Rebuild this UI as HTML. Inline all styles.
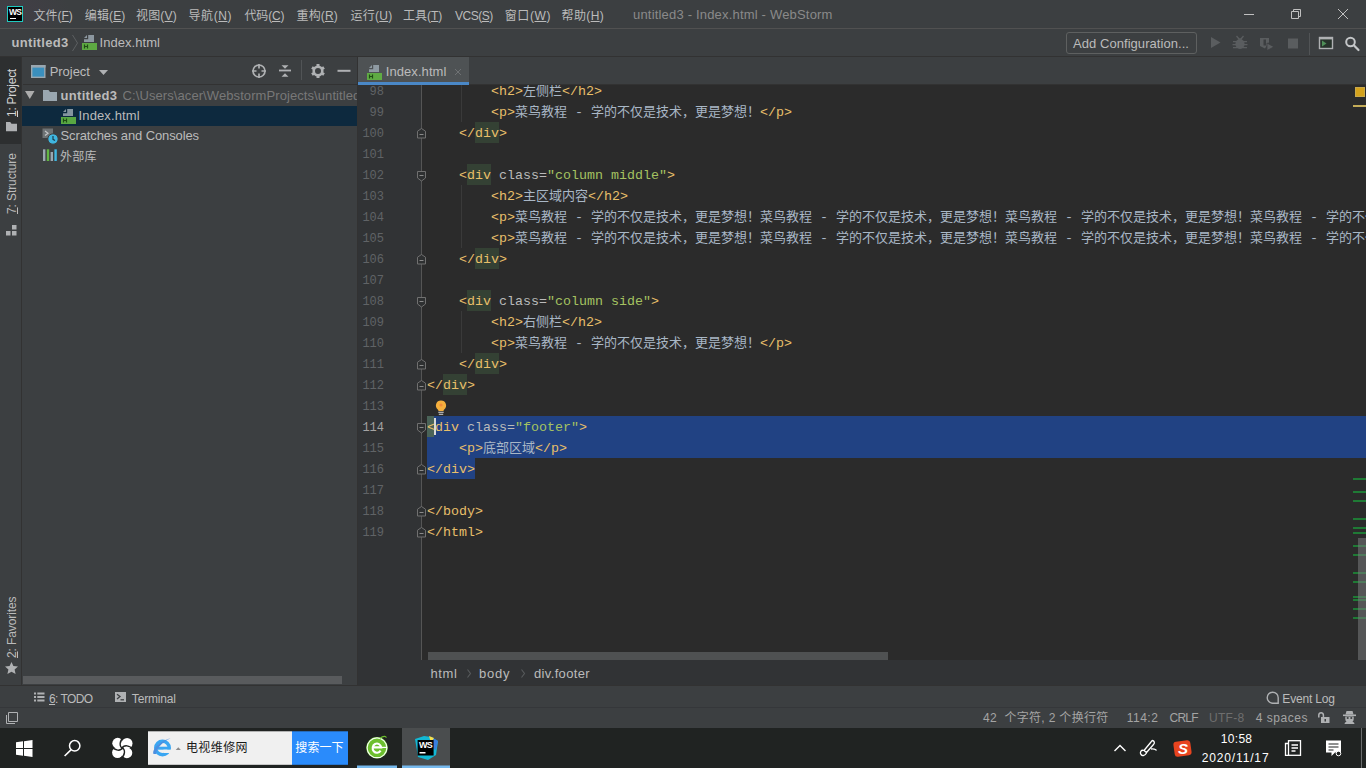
<!DOCTYPE html>
<html lang="zh-CN">
<head>
<meta charset="utf-8">
<title>untitled3 - Index.html - WebStorm</title>
<style>
*{box-sizing:border-box;margin:0;padding:0}
html,body{width:1366px;height:768px;overflow:hidden;background:#3c3f41}
body{position:relative;font-family:"Liberation Sans","Noto Sans CJK SC",sans-serif;font-size:13px;color:#bbbbbb}
.abs{position:absolute}
.t{position:absolute;white-space:nowrap;line-height:20px;height:20px}
svg{position:absolute;overflow:visible}
/* title bar */
#title{left:0;top:0;width:1366px;height:28px;background:radial-gradient(ellipse 60px 30px at 10px 10px,rgba(110,55,110,.12),rgba(110,55,110,0)) #3c3f41}
#titleline{left:0;top:28px;width:1366px;height:1px;background:#515151}
.menu{top:4px;color:#bbbbbb;font-size:13px}
.menu u{text-decoration:underline;text-underline-offset:2px}
/* nav bar */
#nav{left:0;top:29px;width:1366px;height:28px;background:#3c3f41}
#navline{left:0;top:56px;width:1366px;height:1px;background:#323232}
/* left stripe */
#lstripe{left:0;top:57px;width:22px;height:628px;background:#3c3f41;border-right:1px solid #323232}
#ptab{left:0;top:57px;width:21px;height:87px;background:#2d2f30}
.vt{position:absolute;white-space:nowrap;transform-origin:0 0;transform:rotate(-90deg);line-height:22px;height:22px;font-size:13px;color:#bbbbbb}
/* project panel */
#proj{left:22px;top:57px;width:336px;height:628px;background:#3c3f41}
#treesel{left:22px;top:106px;width:335px;height:20px;background:#0d293e}
#projscroll{left:23px;top:676px;width:319px;height:8px;background:#595b5d}
/* editor */
#tabs{left:358px;top:57px;width:1008px;height:28px;background:#3c3f41}
#tab{left:358px;top:57px;width:111px;height:28px;background:#4e5254}
#tabul{left:358px;top:82px;width:111px;height:3px;background:#4a88c7}
#tabsline{left:469px;top:84px;width:897px;height:1px;background:#323232}
#editor{left:358px;top:85px;width:1008px;height:575px;background:#2b2b2b;overflow:hidden}
#gutter{left:0;top:0;width:63px;height:575px;background:#313335}
#foldline{left:63px;top:0;width:1px;height:575px;background:#555555}
.ln{position:absolute;left:0;width:26px;text-align:right;font-family:"Liberation Mono",monospace;font-size:12px;line-height:21px;height:21px;color:#606366}
.cl{position:absolute;left:69px;white-space:pre;font-family:"Liberation Mono","Noto Sans CJK SC",monospace;font-size:13.333px;line-height:21px;height:21px;color:#a9b7c6}
.cl .z{font-size:13px;font-family:"Noto Sans CJK SC",sans-serif;line-height:0;position:relative;top:-0.5px}
.tg{color:#e8bf6a}
.an{color:#bababa}
.av{color:#a5c261}
.hl{background:#344134;display:inline-block;height:21px;vertical-align:top;margin-top:-1px;padding-top:1px}
.ln.cur{color:#a4a3a3}
#sel1{left:69px;top:331px;width:940px;height:42px;background:#214283}
#sel2{left:69px;top:373px;width:48px;height:21px;background:#214283}
/* breadcrumbs */
#crumbs{left:358px;top:660px;width:1008px;height:25px;background:#313335}
/* bottom */
#bstripe{left:0;top:685px;width:1366px;height:22px;background:#3c3f41;border-top:1px solid #323232}
#status{left:0;top:707px;width:1366px;height:21px;background:#3c3f41;border-top:1px solid #35373a}
#taskbar{left:0;top:728px;width:1366px;height:40px;background:#202322}
</style>
</head>
<body>
<!-- TITLE BAR -->
<div class="abs" id="title"></div>
<div class="abs" id="titleline"></div>
<!-- NAV BAR -->
<div class="abs" id="nav"></div>
<div class="abs" id="navline"></div>
<!-- WS logo -->
<div class="abs" style="left:7px;top:6px;width:16px;height:16px;background:#000;border:1px solid #20c9c0"></div>
<div class="abs" style="left:8px;top:8px;width:14px;height:9px;font-family:'Liberation Sans',sans-serif;font-weight:bold;font-size:8.500px;line-height:9px;color:#fff;letter-spacing:-0.900px;white-space:nowrap;text-align:center">WS</div>
<div class="abs" style="left:10px;top:18px;width:6px;height:1px;background:#fff"></div>
<!-- window controls -->
<svg style="left:1238px;top:4px" width="120" height="20" viewBox="0 0 120 20">
<path d="M6 10.5h10" stroke="#c0c0c0" stroke-width="1" fill="none"/>
<path d="M53.5 7.5h7v7h-7zM55.5 7.5v-2h7v7h-2" stroke="#c0c0c0" stroke-width="1" fill="none"/>
<path d="M100 5l10 10M110 5l-10 10" stroke="#c0c0c0" stroke-width="1" fill="none"/>
</svg>

<!-- nav chevron -->
<svg style="left:70px;top:33px" width="10" height="20" viewBox="0 0 10 20"><path d="M2.5 2l5 8-5 8" stroke="#5c5f61" stroke-width="1" fill="none"/></svg>
<!-- nav html icon -->
<svg style="left:82px;top:35px" width="15" height="15" viewBox="0 0 15 15"><path d="M5 0h7v7H2V3z" fill="#9aa7b0" opacity=".85"/><path d="M5.6 0v3.600H2" fill="none" stroke="#3c3f41" stroke-width="1.200"/><rect x="0" y="8" width="15" height="7" fill="#62b543" opacity=".9"/><path d="M2.500 9.500v4M5.500 9.500v4M2.500 11.500h3" stroke="#1f4d14" stroke-width="1.200" fill="none"/></svg>
<!-- add configuration -->
<div class="abs" style="left:1066px;top:32px;width:131px;height:22px;border:1px solid #5e6060;border-radius:3px"></div>
<!-- run icons -->
<svg style="left:1205px;top:33px" width="161" height="22" viewBox="0 0 161 22">
<path d="M6 4l9.5 5.5L6 15z" fill="#5a5d5f"/>
<g fill="#5a5d5f"><ellipse cx="35" cy="11" rx="4.600" ry="5"/><path d="M31.500 3l2.500 3h2l2.500-3" fill="none" stroke="#5a5d5f" stroke-width="1.300"/><path d="M28 8h14v1.300H28zM27.500 11h15v1.300h-15zM28 14h14v1.300H28z"/></g>
<path d="M55 5h9v4l-4 6.5-5-2.500z" fill="#5a5d5f"/><path d="M58.500 6.500h2.500v6h-2.500z" fill="#3c3f41"/><path d="M62 10l7 3.800-7 3.800z" fill="#5a5d5f" stroke="#3c3f41" stroke-width=".8"/>
<rect x="83" y="5.500" width="10" height="10" fill="#5a5d5f"/>
<path d="M104.500 0v22" stroke="#515456" stroke-width="1"/>
<rect x="114.500" y="4.500" width="13" height="11" fill="#27332b" stroke="#afb1b3" stroke-width="1.400"/><rect x="114" y="4" width="14" height="2.400" fill="#afb1b3"/><path d="M117 7.500l4.500 3-4.500 3z" fill="#4f8f58"/>
<circle cx="145.500" cy="9" r="4.300" fill="none" stroke="#c4c6c8" stroke-width="2"/><path d="M148.800 12.300l4.700 4.700" stroke="#c4c6c8" stroke-width="2.200" stroke-linecap="round"/>
</svg>

<!-- LEFT STRIPE -->
<div class="abs" id="lstripe"></div>
<div class="abs" id="ptab"></div>
<!-- PROJECT PANEL -->
<div class="abs" id="proj"></div>
<div class="abs" id="treesel"></div>
<div class="abs" id="projscroll"></div>
<div class="abs" style="left:357px;top:57px;width:1px;height:628px;background:#323232"></div>
<!-- left stripe contents -->
<div class="vt" style="left:1px;top:117px;color:#d4d4d4;font-size:12px;letter-spacing:-0.28px"><u>1</u>: Project</div>
<svg style="left:6px;top:122px" width="11" height="9.300" viewBox="0 0 13 11"><path d="M0 0h5l1.500 2H13v9H0z" fill="#afb1b3"/></svg>
<div class="vt" style="left:1px;top:214px;font-size:12px;letter-spacing:-0.1px"><u>7</u>: Structure</div>
<svg style="left:6px;top:225px" width="11" height="11" viewBox="0 0 11 11"><rect x="6" y="0" width="4.500" height="4.500" fill="#afb1b3"/><rect x="0" y="6" width="4.500" height="4.500" fill="#afb1b3"/><rect x="6" y="6" width="4.500" height="4.500" fill="#afb1b3"/></svg>
<div class="vt" style="left:1px;top:658px;font-size:12px;letter-spacing:-0.1px"><u>2</u>: Favorites</div>
<svg style="left:5px;top:662px" width="13" height="12" viewBox="0 0 13 12"><path d="M6.500 0l1.900 4.100 4.600.5-3.400 3 1 4.400-4.100-2.300L2.400 12l1-4.400L0 4.600l4.600-.5z" fill="#afb1b3"/></svg>
<!-- project header -->
<div class="abs" style="left:23px;top:84px;width:334px;height:1px;background:#323232"></div>
<svg style="left:31px;top:65px" width="15" height="13" viewBox="0 0 15 13"><rect x=".700" y=".700" width="13.100" height="11.600" fill="#3a8fbd" stroke="#9aa7b0" stroke-width="1.400"/><rect x="0" y="0" width="14.500" height="2.600" fill="#9aa7b0"/></svg>
<svg style="left:99px;top:70px" width="9" height="5" viewBox="0 0 9 5"><path d="M0 0h9L4.500 5z" fill="#afb1b3"/></svg>
<svg style="left:250px;top:60px" width="104" height="22" viewBox="0 0 104 22">
<circle cx="9" cy="11" r="6" fill="none" stroke="#afb1b3" stroke-width="1.700"/><path d="M9 4v4.500M9 13.500v4.500M2 11h4.500M11.500 11h4.500" stroke="#afb1b3" stroke-width="1.700"/>
<path d="M29 10.500h12" stroke="#afb1b3" stroke-width="1.800"/><path d="M31.500 5.300h7L35 8.800zM31.500 16.700h7L35 13.200z" fill="#afb1b3"/>
<path d="M51.500 0v20" stroke="#515456" stroke-width="1"/>
<g transform="translate(68 11)"><circle r="4.300" fill="none" stroke="#afb1b3" stroke-width="2.600"/><g fill="#afb1b3"><rect x="-1.500" y="-7" width="3" height="3"/><rect x="-1.500" y="4" width="3" height="3"/><rect x="-1.500" y="-7" width="3" height="3" transform="rotate(60)"/><rect x="-1.500" y="4" width="3" height="3" transform="rotate(60)"/><rect x="-1.500" y="-7" width="3" height="3" transform="rotate(120)"/><rect x="-1.500" y="4" width="3" height="3" transform="rotate(120)"/></g></g>
<path d="M87.500 10.800h13" stroke="#afb1b3" stroke-width="2"/>
</svg>
<!-- tree icons -->
<svg style="left:25px;top:91px" width="10" height="8" viewBox="0 0 10 8"><path d="M0 0h9.500L4.750 8z" fill="#adadad"/></svg>
<svg style="left:43px;top:90px" width="14" height="11" viewBox="0 0 14 11"><path d="M0 0h5.500l1.500 2H14v9H0z" fill="#9aa7b0"/></svg>
<svg style="left:61px;top:109px" width="15" height="15" viewBox="0 0 15 15"><path d="M5 0h7v7H2V3z" fill="#9aa7b0" opacity=".85"/><path d="M5.6 0v3.600H2" fill="none" stroke="#0d293e" stroke-width="1.200"/><rect x="0" y="8" width="15" height="7" fill="#62b543" opacity=".9"/><path d="M2.500 9.500v4M5.500 9.500v4M2.500 11.500h3" stroke="#1f4d14" stroke-width="1.200" fill="none"/></svg>
<svg style="left:42px;top:128px" width="17" height="17" viewBox="0 0 17 17"><rect x=".500" y=".500" width="10.500" height="9.500" fill="#6e7375"/><path d="M3 3l3 2.300L3 7.600" stroke="#c4c6c8" stroke-width="1.200" fill="none"/><circle cx="11" cy="11" r="5.200" fill="#3fb6e0" stroke="#3c3f41" stroke-width="1"/><path d="M11 8v3.300l2 1.200" stroke="#1d3d4a" stroke-width="1.200" fill="none"/></svg>
<svg style="left:43px;top:149px" width="15" height="12" viewBox="0 0 15 12"><rect x="0" y=".300" width="2.400" height="11.700" fill="#9aa7b0"/><rect x="3.800" y=".300" width="2.400" height="11.700" fill="#62b543"/><rect x="7.600" y="3" width="2.400" height="9" fill="#9aa7b0"/><rect x="11.400" y=".300" width="2.400" height="11.700" fill="#40b6e0"/></svg>

<!-- EDITOR TABS -->
<div class="abs" id="tabs"></div>
<div class="abs" id="tab"></div>
<div class="abs" id="tabul"></div>
<div class="abs" id="tabsline"></div>
<svg style="left:367px;top:65px" width="15" height="15" viewBox="0 0 15 15"><path d="M5 0h7v7H2V3z" fill="#9aa7b0" opacity=".85"/><path d="M5.6 0v3.600H2" fill="none" stroke="#4e5254" stroke-width="1.200"/><rect x="0" y="8" width="15" height="7" fill="#62b543" opacity=".9"/><path d="M2.500 9.500v4M5.500 9.500v4M2.500 11.500h3" stroke="#1f4d14" stroke-width="1.200" fill="none"/></svg>
<svg style="left:454px;top:68px" width="8" height="8" viewBox="0 0 8 8"><path d="M1 1l6 6M7 1l-6 6" stroke="#6e7173" stroke-width="1" fill="none"/></svg>

<!-- EDITOR -->
<div class="abs" id="editor">
<div class="abs" id="gutter"></div>
<div class="abs" id="foldline"></div>
<div class="abs" id="sel1"></div>
<div class="abs" id="sel2"></div>
<div class="abs" style="left:103px;top:-5px;width:1px;height:42px;background:#3a3a3a"></div>
<div class="abs" style="left:103px;top:100px;width:1px;height:63px;background:#3a3a3a"></div>
<div class="abs" style="left:103px;top:226px;width:1px;height:42px;background:#3a3a3a"></div>
<div class="abs" style="left:69px;top:331px;width:7px;height:21px;background:#4a6358"></div>
<svg style="left:59px;top:43px" width="10" height="11" viewBox="0 0 10 11"><path d="M.5 3.200L4.500 .500 8.500 3.200V10H.500z" fill="#2e3031" stroke="#707070" stroke-width="1"/><path d="M2.500 6.500h4" stroke="#8a8a8a" stroke-width="1"/></svg>
<svg style="left:59px;top:169px" width="10" height="11" viewBox="0 0 10 11"><path d="M.5 3.200L4.500 .500 8.500 3.200V10H.500z" fill="#2e3031" stroke="#707070" stroke-width="1"/><path d="M2.500 6.500h4" stroke="#8a8a8a" stroke-width="1"/></svg>
<svg style="left:59px;top:274px" width="10" height="11" viewBox="0 0 10 11"><path d="M.5 3.200L4.500 .500 8.500 3.200V10H.500z" fill="#2e3031" stroke="#707070" stroke-width="1"/><path d="M2.500 6.500h4" stroke="#8a8a8a" stroke-width="1"/></svg>
<svg style="left:59px;top:295px" width="10" height="11" viewBox="0 0 10 11"><path d="M.5 3.200L4.500 .500 8.500 3.200V10H.500z" fill="#2e3031" stroke="#707070" stroke-width="1"/><path d="M2.500 6.500h4" stroke="#8a8a8a" stroke-width="1"/></svg>
<svg style="left:59px;top:379px" width="10" height="11" viewBox="0 0 10 11"><path d="M.5 3.200L4.500 .500 8.500 3.200V10H.500z" fill="#2e3031" stroke="#707070" stroke-width="1"/><path d="M2.500 6.500h4" stroke="#8a8a8a" stroke-width="1"/></svg>
<svg style="left:59px;top:421px" width="10" height="11" viewBox="0 0 10 11"><path d="M.5 3.200L4.500 .500 8.500 3.200V10H.500z" fill="#2e3031" stroke="#707070" stroke-width="1"/><path d="M2.500 6.500h4" stroke="#8a8a8a" stroke-width="1"/></svg>
<svg style="left:59px;top:442px" width="10" height="11" viewBox="0 0 10 11"><path d="M.5 3.200L4.500 .500 8.500 3.200V10H.500z" fill="#2e3031" stroke="#707070" stroke-width="1"/><path d="M2.500 6.500h4" stroke="#8a8a8a" stroke-width="1"/></svg>
<svg style="left:59px;top:86px" width="10" height="11" viewBox="0 0 10 11"><path d="M.500 .500H8.500V7L4.500 10 .500 7z" fill="#2e3031" stroke="#707070" stroke-width="1"/><path d="M2.500 4.500h4" stroke="#8a8a8a" stroke-width="1"/></svg>
<svg style="left:59px;top:212px" width="10" height="11" viewBox="0 0 10 11"><path d="M.500 .500H8.500V7L4.500 10 .500 7z" fill="#2e3031" stroke="#707070" stroke-width="1"/><path d="M2.500 4.500h4" stroke="#8a8a8a" stroke-width="1"/></svg>
<svg style="left:59px;top:338px" width="10" height="11" viewBox="0 0 10 11"><path d="M.500 .500H8.500V7L4.500 10 .500 7z" fill="#2e3031" stroke="#707070" stroke-width="1"/><path d="M2.500 4.500h4" stroke="#8a8a8a" stroke-width="1"/></svg>
<svg style="left:77px;top:315px" width="12" height="16" viewBox="0 0 12 16"><path d="M6 .500a5 5 0 0 1 3.200 8.900c-.500.500-.700 1-.700 1.600h-5c0-.600-.200-1.100-.700-1.600A5 5 0 0 1 6 .500z" fill="#f4af3d"/><circle cx="6" cy="5" r="1.600" fill="#f28b3a"/><path d="M3.300 12.200h5.400M3.800 14.200h4.400" stroke="#d8d8d8" stroke-width="1.100"/></svg>
<div class="abs" style="left:76px;top:333px;width:2px;height:17px;background:#d8d8d8;z-index:5"></div>
<div class="abs" style="left:997px;top:2px;width:10px;height:10px;background:#d4a21c;border:1px solid #c9a94a"></div><div class="abs" style="left:995px;top:20px;width:13px;height:2px;background:#c4ac58"></div>
<div class="abs" style="left:995px;top:393.0px;width:13px;height:2px;background:#1f7a35"></div>
<div class="abs" style="left:995px;top:406.0px;width:13px;height:2px;background:#1f7a35"></div>
<div class="abs" style="left:995px;top:415.0px;width:13px;height:2px;background:#1f7a35"></div>
<div class="abs" style="left:995px;top:433.0px;width:13px;height:2px;background:#1f7a35"></div>
<div class="abs" style="left:995px;top:442.0px;width:13px;height:2px;background:#1f7a35"></div>
<div class="abs" style="left:995px;top:446.5px;width:13px;height:2px;background:#1f7a35"></div>
<div class="abs" style="left:995px;top:460.0px;width:13px;height:2px;background:#1f7a35"></div>
<div class="abs" style="left:995px;top:469.0px;width:13px;height:2px;background:#1f7a35"></div>
<div class="abs" style="left:995px;top:487.0px;width:13px;height:2px;background:#1f7a35"></div>
<div class="abs" style="left:995px;top:496.0px;width:13px;height:2px;background:#1f7a35"></div>
<div class="abs" style="left:995px;top:511.0px;width:13px;height:2px;background:#1f7a35"></div>
<div class="abs" style="left:995px;top:514.0px;width:13px;height:2px;background:#1f7a35"></div>
<div class="abs" style="left:995px;top:523.0px;width:13px;height:2px;background:#1f7a35"></div>
<div class="abs" style="left:995px;top:532.0px;width:13px;height:2px;background:#1f7a35"></div>
<div class="abs" style="left:1000px;top:453px;width:8px;height:122px;background:rgba(120,122,124,.55)"></div>
<div class="abs" style="left:70px;top:567px;width:460px;height:8px;background:#4f5152"></div>
<div class="ln" style="top:-3px">98</div>
<div class="cl" style="top:-4px;left:133px"><span class="tg">&lt;h2&gt;</span><span class="z">左侧栏</span><span class="tg">&lt;/h2&gt;</span></div>
<div class="ln" style="top:18px">99</div>
<div class="cl" style="top:17px;left:133px"><span class="tg">&lt;p&gt;</span><span class="z">菜鸟教程</span> - <span class="z">学的不仅是技术，更是梦想！</span><span class="tg">&lt;/p&gt;</span></div>
<div class="ln" style="top:39px">100</div>
<div class="cl" style="top:38px;left:101px"><span class="tg">&lt;/</span><span class="tg hl">div</span><span class="tg">&gt;</span></div>
<div class="ln" style="top:60px">101</div>
<div class="ln" style="top:81px">102</div>
<div class="cl" style="top:80px;left:101px"><span class="tg">&lt;</span><span class="tg hl">div</span><span class="an"> class=</span><span class="av">"column middle"</span><span class="tg">&gt;</span></div>
<div class="ln" style="top:102px">103</div>
<div class="cl" style="top:101px;left:133px"><span class="tg">&lt;h2&gt;</span><span class="z">主区域内容</span><span class="tg">&lt;/h2&gt;</span></div>
<div class="ln" style="top:123px">104</div>
<div class="cl" style="top:122px;left:133px"><span class="tg">&lt;p&gt;</span><span class="z">菜鸟教程</span> - <span class="z">学的不仅是技术，更是梦想！菜鸟教程</span> - <span class="z">学的不仅是技术，更是梦想！菜鸟教程</span> - <span class="z">学的不仅是技术，更是梦想！菜鸟教程</span> - <span class="z">学的不仅是技术，更是梦想！菜鸟教程</span> - <span class="z">学的不仅是技术，更是梦想！</span></div>
<div class="ln" style="top:144px">105</div>
<div class="cl" style="top:143px;left:133px"><span class="tg">&lt;p&gt;</span><span class="z">菜鸟教程</span> - <span class="z">学的不仅是技术，更是梦想！菜鸟教程</span> - <span class="z">学的不仅是技术，更是梦想！菜鸟教程</span> - <span class="z">学的不仅是技术，更是梦想！菜鸟教程</span> - <span class="z">学的不仅是技术，更是梦想！菜鸟教程</span> - <span class="z">学的不仅是技术，更是梦想！</span></div>
<div class="ln" style="top:165px">106</div>
<div class="cl" style="top:164px;left:101px"><span class="tg">&lt;/</span><span class="tg hl">div</span><span class="tg">&gt;</span></div>
<div class="ln" style="top:186px">107</div>
<div class="ln" style="top:207px">108</div>
<div class="cl" style="top:206px;left:101px"><span class="tg">&lt;</span><span class="tg hl">div</span><span class="an"> class=</span><span class="av">"column side"</span><span class="tg">&gt;</span></div>
<div class="ln" style="top:228px">109</div>
<div class="cl" style="top:227px;left:133px"><span class="tg">&lt;h2&gt;</span><span class="z">右侧栏</span><span class="tg">&lt;/h2&gt;</span></div>
<div class="ln" style="top:249px">110</div>
<div class="cl" style="top:248px;left:133px"><span class="tg">&lt;p&gt;</span><span class="z">菜鸟教程</span> - <span class="z">学的不仅是技术，更是梦想！</span><span class="tg">&lt;/p&gt;</span></div>
<div class="ln" style="top:270px">111</div>
<div class="cl" style="top:269px;left:101px"><span class="tg">&lt;/</span><span class="tg hl">div</span><span class="tg">&gt;</span></div>
<div class="ln" style="top:291px">112</div>
<div class="cl" style="top:290px;left:69px"><span class="tg">&lt;/</span><span class="tg hl">div</span><span class="tg">&gt;</span></div>
<div class="ln" style="top:312px">113</div>
<div class="ln cur" style="top:333px">114</div>
<div class="cl" style="top:332px;left:69px"><span class="tg">&lt;</span><span class="tg">div</span><span class="an"> class=</span><span class="av">"footer"</span><span class="tg">&gt;</span></div>
<div class="ln" style="top:354px">115</div>
<div class="cl" style="top:353px;left:101px"><span class="tg">&lt;p&gt;</span><span class="z">底部区域</span><span class="tg">&lt;/p&gt;</span></div>
<div class="ln" style="top:375px">116</div>
<div class="cl" style="top:374px;left:69px"><span class="tg">&lt;/</span><span class="tg">div</span><span class="tg">&gt;</span></div>
<div class="ln" style="top:396px">117</div>
<div class="ln" style="top:417px">118</div>
<div class="cl" style="top:416px;left:69px"><span class="tg">&lt;/body&gt;</span></div>
<div class="ln" style="top:438px">119</div>
<div class="cl" style="top:437px;left:69px"><span class="tg">&lt;/html&gt;</span></div>
</div>
<!-- BREADCRUMBS -->
<div class="abs" id="crumbs"></div>
<!-- BOTTOM -->
<div class="abs" id="bstripe"></div>
<div class="abs" id="status"></div>
<div class="abs" id="taskbar"></div>

<!-- breadcrumb chevrons -->
<svg style="left:466px;top:668px" width="6" height="11" viewBox="0 0 6 11"><path d="M1.500 1.500l3 4-3 4" stroke="#575a5c" stroke-width="1.100" fill="none"/></svg>
<svg style="left:520px;top:668px" width="6" height="11" viewBox="0 0 6 11"><path d="M1.500 1.500l3 4-3 4" stroke="#575a5c" stroke-width="1.100" fill="none"/></svg>
<!-- bottom stripe icons -->
<svg style="left:34px;top:692px" width="11" height="10" viewBox="0 0 11 10"><g fill="#afb1b3"><rect x="0" y=".500" width="2" height="2"/><rect x="3.300" y=".500" width="7.200" height="2"/><rect x="0" y="4" width="2" height="2"/><rect x="3.300" y="4" width="7.200" height="2"/><rect x="0" y="7.500" width="2" height="2"/><rect x="3.300" y="7.500" width="7.200" height="2"/></g></svg>
<svg style="left:115px;top:692px" width="11" height="10" viewBox="0 0 11 10"><rect width="11" height="10" fill="#afb1b3"/><path d="M2 2.200l3 2.400-3 2.400" stroke="#3c3f41" stroke-width="1.300" fill="none"/><path d="M5.500 7.800h3.500" stroke="#3c3f41" stroke-width="1.300"/></svg>
<svg style="left:1266px;top:691px" width="14" height="14" viewBox="0 0 14 14"><path d="M6.700 1.200a5.500 5.500 0 1 0 0 11h5.500v-5.500a5.500 5.500 0 0 0-5.500-5.500z" fill="none" stroke="#afb1b3" stroke-width="1.400"/></svg>
<!-- status icons -->
<svg style="left:5px;top:712px" width="13" height="13" viewBox="0 0 13 13"><path d="M3.500 .500h9v9h-9z" fill="none" stroke="#afb1b3" stroke-width="1"/><path d="M1.500 3v8.500H10" fill="none" stroke="#afb1b3" stroke-width="1"/></svg>
<svg style="left:1317px;top:711px" width="13" height="13" viewBox="0 0 13 13"><rect x="4" y="6" width="8.500" height="6" fill="#afb1b3"/><path d="M1.800 6.500V4a2.300 2.300 0 0 1 4.600 0v2" fill="none" stroke="#afb1b3" stroke-width="1.500"/><rect x="7.500" y="8" width="1.500" height="2.500" fill="#3c3f41"/></svg>
<svg style="left:1343px;top:711px" width="13" height="13" viewBox="0 0 13 13"><g fill="#afb1b3"><path d="M3.500 0h6l1 3.500h-8z"/><rect x="0" y="3.500" width="13" height="1.600"/><path d="M2.300 5.500h8.400v2.500a4.200 3.600 0 0 1-8.400 0z"/><path d="M1.500 13c0-2 2-2.800 5-2.800s5 .8 5 2.800z"/></g><circle cx="4.700" cy="7" r="1.100" fill="#3c3f41"/><circle cx="8.300" cy="7" r="1.100" fill="#3c3f41"/></svg>
<!-- TASKBAR -->
<svg style="left:0;top:728px" width="1366" height="40" viewBox="0 0 1366 40">
<!-- start -->
<path d="M16 14.300l7-1v6.700h-7zM24 13.200l8.500-1.200v8h-8.500zM16 21h7v6.700l-7-1zM24 21h8.500v8l-8.500-1.200z" fill="#fff"/>
<!-- search -->
<circle cx="74.700" cy="17.800" r="5.200" fill="none" stroke="#fff" stroke-width="1.500"/><path d="M71.200 21.600l-6.600 6.400" stroke="#fff" stroke-width="1.600"/>
<!-- fan -->
<g transform="translate(122.300 20)"><g fill="#fff"><circle cx="-4.600" cy="-4.800" r="5.400"/><circle cx="4.800" cy="-4.600" r="5.400"/><circle cx="4.600" cy="4.800" r="5.400"/><circle cx="-4.800" cy="4.600" r="5.400"/><circle r="3"/></g><g fill="none" stroke="#202322" stroke-width="1.400"><path id="sw" d="M.600 .600C-3.500 -1.500 -3 -7.500 1.800 -10.800"/><path d="M.600 .600C-3.500 -1.500 -3 -7.500 1.800 -10.800" transform="rotate(90)"/><path d="M.600 .600C-3.500 -1.500 -3 -7.500 1.800 -10.800" transform="rotate(180)"/><path d="M.600 .600C-3.500 -1.500 -3 -7.500 1.800 -10.800" transform="rotate(270)"/></g></g>
<!-- search box -->
<rect x="148" y="3.300" width="144" height="33.500" fill="#f0f0f0"/>
<rect x="292" y="3.300" width="56" height="33.500" fill="#2a8bfb"/>
<!-- IE -->
<g transform="translate(162.500 20)"><circle r="6.800" fill="none" stroke="#3aa6f2" stroke-width="3.400"/><rect x="-5" y="-1.300" width="12" height="3" fill="#3aa6f2"/><rect x="1" y="1.700" width="9" height="3.300" fill="#f0f0f0"/><path d="M-9 6c-2-5 8-14 17-15.500 -5 1-14 9-14.500 15.500z" fill="#4c8fe0"/></g>
<path d="M175.700 22l2.600-2.800 2.600 2.800z" fill="#8c8c8c"/>
<!-- 360 -->
<rect x="357" y="37.500" width="40" height="2.500" fill="#76b9ed"/>
<g transform="translate(377 19.800)"><circle r="10.700" fill="#6cbf2e"/><circle r="9.900" fill="none" stroke="#f4fff0" stroke-width="1.200"/><path d="M3.600 2.800a4.300 4.600 0 1 1 .600-3.200h-7.500" fill="none" stroke="#fff" stroke-width="2.100"/><path d="M4 -.400h6" stroke="#fff" stroke-width="1.200"/><path d="M3 -9.500c3-2.500 6.500-2.500 6-.500" fill="none" stroke="#6cbf2e" stroke-width="1.100"/></g>
<!-- WS item -->
<rect x="402" y="0" width="48" height="40" fill="#4a4d4e"/>
<rect x="402" y="37.500" width="48" height="2.500" fill="#76b9ed"/>
<g transform="translate(414 8)"><path d="M1 3l9-3 7 1 7 4-2 14-8 5-10-3z" fill="#12b8d4"/><path d="M17 1l7 4-2 9-6-4z" fill="#3a7de0"/><path d="M15 0l5 2-3 5z" fill="#f4e04d"/><rect x="3.600" y="4" width="16" height="15.500" fill="#000"/><rect x="5.500" y="16" width="6" height="1.500" fill="#fff"/></g>
<!-- tray -->
<path d="M1114.500 23l5.500-5.500 5.500 5.500" stroke="#fff" stroke-width="1.400" fill="none"/>
<g fill="none" stroke="#fff" stroke-width="1.300"><path d="M1152.500 12.500c2 .500 2.500 2.500 1 4l-7 8-2.500-2 7-8.500c.500-.800 1-1.500 1.500-1.500z"/><path d="M1144 22.500c-3-1-4.500 2-3 4s4 1 5.500-1.500"/><path d="M1151 21c2-.500 5 .500 5.500 1.500"/></g>
<g transform="translate(1182.500 20.500) rotate(-8)"><rect x="-8.500" y="-7.500" width="17" height="15" rx="3" fill="#e8441f"/></g>
<g fill="none" stroke="#fff" stroke-width="1.300"><rect x="1288.500" y="12.700" width="12" height="14.600"/><path d="M1288.500 15.500h-3v11.800h3M1291.500 17h6.500M1291.500 20h6.500M1291.500 23h4"/></g>
<path d="M1326 12.500h15v12h-6l-3.500 3.500v-3.500H1326z" fill="#fff"/><path d="M1328.500 16h10M1328.500 19h10M1328.500 22h5" stroke="#202322" stroke-width="1.100"/><circle cx="1338.500" cy="25.500" r="2.300" fill="#202322" stroke="#fff" stroke-width="1"/>
<path d="M1361.500 0v40" stroke="#6a6c6d" stroke-width="1"/>
</svg>
<div class="abs" style="left:1175px;top:740px;width:16px;height:18px;line-height:18px;text-align:center;font-family:'Liberation Sans',sans-serif;font-weight:bold;font-style:italic;font-size:15px;color:#fff">S</div>
<div class="abs" style="left:417px;top:740px;width:17px;height:10px;font-family:'Liberation Sans',sans-serif;font-weight:bold;font-size:9px;line-height:10px;color:#fff;letter-spacing:-0.800px;white-space:nowrap;text-align:center">WS</div>
<div class="t" id="m1" style="left:33.5px;top:6.0px;font-size:12px;color:#bbbbbb;letter-spacing:0.0px;">文件(<u>F</u>)</div>
<div class="t" id="m2" style="left:84.8px;top:6.0px;font-size:12px;color:#bbbbbb;letter-spacing:0.125px;">编辑(<u>E</u>)</div>
<div class="t" id="m3" style="left:136.0px;top:6.0px;font-size:12px;color:#bbbbbb;letter-spacing:0.186px;">视图(<u>V</u>)</div>
<div class="t" id="m4" style="left:188.5px;top:6.0px;font-size:12px;color:#bbbbbb;letter-spacing:0.564px;">导航(<u>N</u>)</div>
<div class="t" id="m5" style="left:244.5px;top:6.0px;font-size:12px;color:#bbbbbb;letter-spacing:-0.186px;">代码(<u>C</u>)</div>
<div class="t" id="m6" style="left:296.5px;top:6.0px;font-size:12px;color:#bbbbbb;letter-spacing:0.125px;">重构(<u>R</u>)</div>
<div class="t" id="m7" style="left:350.5px;top:6.0px;font-size:12px;color:#bbbbbb;letter-spacing:0.25px;">运行(<u>U</u>)</div>
<div class="t" id="m8" style="left:403.0px;top:6.0px;font-size:12px;color:#bbbbbb;letter-spacing:0.0px;">工具(<u>T</u>)</div>
<div class="t" id="m9" style="left:455.0px;top:6.0px;font-size:12px;color:#bbbbbb;letter-spacing:-0.5px;">VCS(<u>S</u>)</div>
<div class="t" id="m10" style="left:504.8px;top:6.0px;font-size:12px;color:#bbbbbb;letter-spacing:0.564px;">窗口(<u>W</u>)</div>
<div class="t" id="m11" style="left:561.5px;top:6.0px;font-size:12px;color:#bbbbbb;letter-spacing:0.375px;">帮助(<u>H</u>)</div>
<div class="t" id="wtitle" style="left:633.0px;top:4.5px;font-size:13px;color:#8a8a8a;letter-spacing:0.188px;">untitled3 - Index.html - WebStorm</div>
<div class="t" id="nav1" style="left:11.5px;top:33.0px;font-size:13px;color:#bbbbbb;letter-spacing:0.312px;font-weight:bold;">untitled3</div>
<div class="t" id="nav2" style="left:99.5px;top:33.0px;font-size:13px;color:#bbbbbb;letter-spacing:0.056px;">Index.html</div>
<div class="t" id="addcfg" style="left:1073.0px;top:33.5px;font-size:13px;color:#bbbbbb;letter-spacing:0.053px;">Add Configuration...</div>
<div class="t" id="ph" style="left:49.7px;top:61.5px;font-size:13px;color:#bbbbbb;letter-spacing:-0.034px;">Project</div>
<div class="t" id="t1" style="left:60.6px;top:85.5px;font-size:13px;color:#bbbbbb;letter-spacing:0.275px;font-weight:bold;">untitled3</div>
<div class="t" id="t2" style="left:122.6px;top:85.5px;font-size:13px;color:#787878;letter-spacing:0.082px;width:234.4px;overflow:hidden;">C:\Users\acer\WebstormProjects\untitled3</div>
<div class="t" id="t3" style="left:78.6px;top:105.5px;font-size:13px;color:#bbbbbb;letter-spacing:0.111px;">Index.html</div>
<div class="t" id="t4" style="left:60.5px;top:126.3px;font-size:13px;color:#bbbbbb;letter-spacing:-0.113px;">Scratches and Consoles</div>
<div class="t" id="t5" style="left:60.0px;top:146.5px;font-size:12px;color:#bbbbbb;letter-spacing:0.25px;">外部库</div>
<div class="t" id="tabt" style="left:385.8px;top:61.7px;font-size:13px;color:#bbbbbb;letter-spacing:0.066px;">Index.html</div>
<div class="t" id="bc1" style="left:430.4px;top:663.5px;font-size:13px;color:#bbbbbb;letter-spacing:0.633px;">html</div>
<div class="t" id="bc2" style="left:479.0px;top:663.5px;font-size:13px;color:#bbbbbb;letter-spacing:0.799px;">body</div>
<div class="t" id="bc3" style="left:534.0px;top:663.5px;font-size:13px;color:#bbbbbb;letter-spacing:0.345px;">div.footer</div>
<div class="t" id="b1" style="left:49.0px;top:688.5px;font-size:12px;color:#bbbbbb;letter-spacing:-0.583px;"><u>6</u>: TODO</div>
<div class="t" id="b2" style="left:131.8px;top:688.5px;font-size:12px;color:#bbbbbb;letter-spacing:-0.171px;">Terminal</div>
<div class="t" id="b3" style="left:1282.3px;top:688.5px;font-size:12px;color:#bbbbbb;letter-spacing:-0.175px;">Event Log</div>
<div class="t" id="s1" style="left:983.1px;top:708.1px;font-size:12px;color:#a4a4a4;letter-spacing:0.321px;">42&nbsp; 个字符, 2 个换行符</div>
<div class="t" id="s2" style="left:1126.7px;top:708.1px;font-size:12px;color:#a4a4a4;letter-spacing:0.5px;">114:2</div>
<div class="t" id="s3" style="left:1169.5px;top:708.1px;font-size:12px;color:#a4a4a4;letter-spacing:-0.766px;">CRLF</div>
<div class="t" id="s4" style="left:1209.0px;top:708.1px;font-size:12px;color:#6e6e6e;letter-spacing:0.275px;">UTF-8</div>
<div class="t" id="s5" style="left:1255.8px;top:708.1px;font-size:12px;color:#a4a4a4;letter-spacing:0.515px;">4 spaces</div>
<div class="t" id="k1" style="left:185.9px;top:738.0px;font-size:12px;color:#1a1a1a;letter-spacing:0.425px;">电视维修网</div>
<div class="t" id="k2" style="left:295.3px;top:738.0px;font-size:12px;color:#ffffff;letter-spacing:0.099px;">搜索一下</div>
<div class="t" id="k3" style="left:1220.8px;top:728.6px;font-size:12px;color:#ffffff;letter-spacing:0.3px;">10:58</div>
<div class="t" id="k4" style="left:1201.7px;top:747.7px;font-size:12px;color:#ffffff;letter-spacing:0.856px;">2020/11/17</div>
</body>
</html>
